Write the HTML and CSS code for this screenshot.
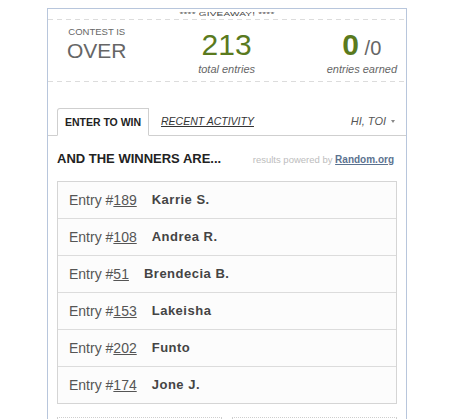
FILE: index.html
```html
<!DOCTYPE html>
<html lang="en">
<head>
<meta charset="utf-8">
<title>Giveaway</title>
<link rel="stylesheet" href="styles.css">
</head>
<body>
<div class="widget">
  <div class="banner"><span class="banner-text">**** GIVEAWAY! ****</span></div>
  <div class="dash"></div>

  <div class="stats">
    <div class="stat stat-status">
      <div class="status-label">CONTEST IS</div>
      <div class="status-value">OVER</div>
    </div>
    <div class="stat stat-total">
      <div class="big-num">213</div>
      <div class="stat-caption">total entries</div>
    </div>
    <div class="stat stat-earned">
      <div class="earned-line"><span class="big-num bold">0</span><span class="of-num"> /0</span></div>
      <div class="stat-caption">entries earned</div>
    </div>
  </div>
  <div class="dash"></div>

  <div class="tabs">
    <div class="tab active">ENTER TO WIN</div>
    <a class="tab link" href="#">RECENT ACTIVITY</a>
    <div class="user">HI, TOI <span class="caret"></span></div>
  </div>

  <div class="content">
    <div class="winners-head">
      <div class="winners-title">AND THE WINNERS ARE...</div>
      <div class="powered">results powered by <a href="#">Random.org</a></div>
    </div>

    <ul class="winners">
      <li><span class="entry">Entry #<u>189</u></span><span class="name">Karrie S.</span></li>
      <li><span class="entry">Entry #<u>108</u></span><span class="name">Andrea R.</span></li>
      <li><span class="entry">Entry #<u>51</u></span><span class="name">Brendecia B.</span></li>
      <li><span class="entry">Entry #<u>153</u></span><span class="name">Lakeisha</span></li>
      <li><span class="entry">Entry #<u>202</u></span><span class="name">Funto</span></li>
      <li><span class="entry">Entry #<u>174</u></span><span class="name">Jone J.</span></li>
    </ul>

    <div class="boxes">
      <div class="box"></div>
      <div class="box"></div>
    </div>
  </div>
</div>
</body>
</html>
```

FILE: styles.css
```css
html, body {
  margin: 0;
  background: #fff;
}

body {
  padding: 8px 0 0 47px;
  font-family: "Liberation Sans", Arial, sans-serif;
  color: #555;
}

.widget {
  width: 360px;
  box-sizing: border-box;
  border: 1px solid #b8c6dc;
  border-bottom: none;
  background: #fff;
}

/* squat banner line above the stats */
.banner {
  height: 10px;
  box-sizing: border-box;
  padding-top: 3px;
  text-align: center;
}
.banner-text {
  display: block;
  font-size: 10px;
  line-height: 10px;
  color: #444;
  letter-spacing: 0.2px;
  transform: scaleY(0.5);
  transform-origin: center top;
}

.dash {
  height: 1px;
  background-image: repeating-linear-gradient(to right, #dcdcdc 0 5px, transparent 5px 9px);
}

/* stats row */
.stats {
  height: 61px;
  box-sizing: border-box;
  padding: 6px 9px 0 19px;
  display: flex;
  justify-content: space-between;
  align-items: flex-start;
}
.stat {
  display: flex;
  flex-direction: column;
  align-items: center;
  text-align: center;
  color: #666;
}
.status-label {
  font-size: 9.5px;
  line-height: 11px;
}
.status-value {
  margin-top: 3px;
  font-size: 21px;
  line-height: 22px;
}
.big-num {
  font-size: 30px;
  line-height: 30px;
  color: #5a7a1e;
}
.stat-total .big-num,
.earned-line {
  margin-top: 3.5px;
}
.earned-line {
  height: 30px;
  line-height: 30px;
  white-space: nowrap;
}
.big-num.bold {
  font-weight: bold;
}
.of-num {
  font-size: 20px;
  color: #666;
}
.stat-caption {
  margin-top: 3px;
  font-size: 11px;
  line-height: 13px;
  font-style: italic;
  color: #666;
}

/* tabs */
.tabs {
  margin-top: 26px;
  padding: 0 11px 0 9px;
  display: flex;
  align-items: flex-end;
  border-bottom: 1px solid #cfcfcf;
}
.tab {
  display: block;
  font-size: 10.5px;
  line-height: 26px;
}
.tab.active {
  width: 92px;
  box-sizing: border-box;
  border: 1px solid #cfcfcf;
  border-bottom: 1px solid #fff;
  border-top-left-radius: 3px;
  margin-bottom: -1px;
  background: #fff;
  text-align: center;
  font-size: 10.5px;
  font-weight: bold;
  color: #222;
}
.tab.link {
  margin-left: 12px;
  margin-bottom: 1px;
  font-style: italic;
  color: #333;
  text-decoration: underline;
}
.user {
  margin-left: auto;
  margin-bottom: 1px;
  font-size: 11px;
  line-height: 26px;
  font-style: italic;
  color: #555;
  display: flex;
  align-items: center;
}
.caret {
  margin-left: 5px;
  width: 0;
  height: 0;
  border-top: 3px solid #888;
  border-left: 2.5px solid transparent;
  border-right: 2.5px solid transparent;
}

/* winners */
.content {
  padding: 15px 9px 20px 9px;
}
.winners-head {
  display: flex;
  justify-content: space-between;
  align-items: baseline;
  padding-right: 3px;
}
.winners-title {
  font-size: 13px;
  line-height: 16px;
  font-weight: bold;
  color: #222;
}
.powered {
  font-size: 9.5px;
  color: #bdbdbd;
}
.powered a {
  font-size: 10px;
  font-weight: bold;
  color: #5b7290;
  text-decoration: underline;
}

.winners {
  list-style: none;
  margin: 14px 0 0;
  padding: 0;
  border: 1px solid #d5d5d5;
  background: #fcfcfc;
}
.winners li {
  height: 36px;
  padding-left: 11px;
  display: flex;
  align-items: center;
  font-size: 14px;
  line-height: 36px;
}
.winners li + li {
  border-top: 1px solid #dcdcdc;
}
.entry {
  color: #555;
}
.entry u {
  text-decoration-color: #555;
}
.name {
  margin-left: 15px;
  font-size: 13px;
  font-weight: bold;
  letter-spacing: 0.5px;
  color: #444;
}

.boxes {
  margin-top: 13px;
  display: flex;
  gap: 10px;
}
.box {
  flex: 1;
  height: 40px;
  border: 1px dotted #cfcfcf;
}
```
